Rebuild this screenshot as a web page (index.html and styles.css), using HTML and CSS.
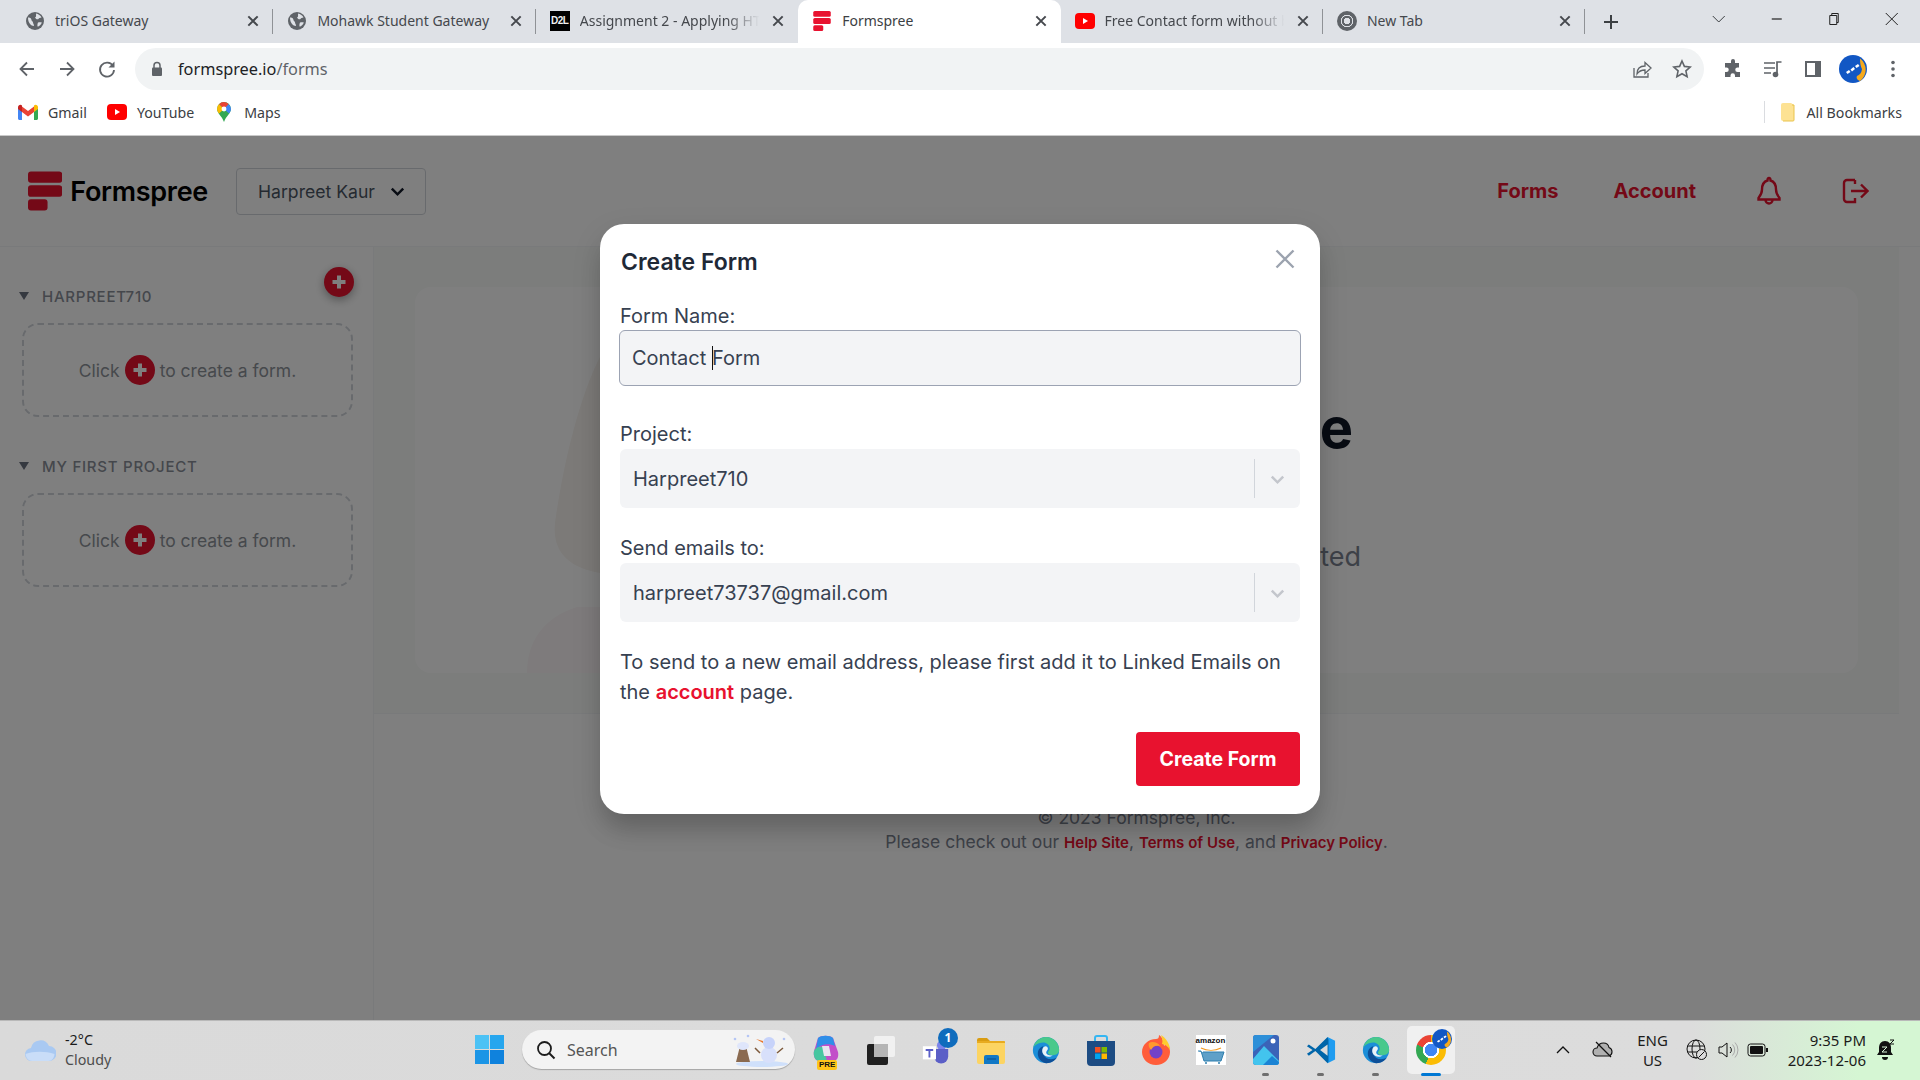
FILE: index.html
```html
<!DOCTYPE html>
<html lang="en">
<head>
  <meta charset="UTF-8">
  <title>Formspree</title>
  <link rel="stylesheet" href="styles.css">
</head>
<body>
  <svg class="defs" width="0" height="0">
    <symbol id="globe" viewBox="0 0 20 20">
      <circle cx="10" cy="10" r="9" fill="#5f6368"/>
      <path d="M3 6.5c2-.5 3.5 1 3.5 2.5 0 1.2 1.5 1.2 1.5 2.5 0 1.2 1 1.5 1 3.5-3 0-6-3-6-8.500zM11 2.5c2.5.5 4.5 2 5.5 4-1.500.5-2.500 0-3 1.500-1.500 1-3-.5-3.500-1.500 1.500-.5 1-2.500 1-4zM13 11.5c1.5-.5 3-.5 3.800 0-.7 2-2 3.500-4 4.300-.8-1.300-.3-3 .2-4.300z" fill="#dee1e6"/>
    </symbol>
    <symbol id="fs-mark" viewBox="0 0 35 40">
      <rect width="35" height="11.5" rx="3"/>
      <rect y="14" width="35" height="12" rx="3"/>
      <rect y="28.5" width="20" height="11.5" rx="3"/>
    </symbol>
    <symbol id="close-x" viewBox="0 0 12 12">
      <path d="M2 2l8 8M10 2l-8 8" fill="none" stroke="#45484d" stroke-width="1.7"/>
    </symbol>
    <symbol id="yt" viewBox="0 0 20 16">
      <rect width="20" height="16" rx="4" fill="#f00"/>
      <path d="M8 5l5 3-5 3z" fill="#fff"/>
    </symbol>
    <symbol id="plus-dot" viewBox="0 0 30 30">
      <circle cx="15" cy="15" r="15" fill="#e8122f"/>
      <path d="M15 8.5v13M8.5 15h13" stroke="#fff" stroke-width="4"/>
    </symbol>
    <symbol id="chev" viewBox="0 0 20 20">
      <path d="M4 7l6 6 6-6" fill="none" stroke="currentColor" stroke-width="2.6"/>
    </symbol>
    <symbol id="avatar" viewBox="0 0 28 28">
      <circle cx="14" cy="14" r="14" fill="#1257c4"/>
      <path d="M21 3.500A14 14 0 0 1 21 26c-3-1-4-3-3-5 2.5-1 4.5-3 5-7-1-1.500-2-6-2-10.500z" fill="#f6a91b"/>
      <path d="M7 17l3-2 1.500 2-3 2zM16 11l3-2 1.500 2-3 2zM11.500 14.500l3-2.500 1.500 2-3 2.500z" fill="#fff"/>
    </symbol>
    <symbol id="edge" viewBox="0 0 32 32">
      <circle cx="16" cy="16" r="14" fill="#1b8ed8"/>
      <path d="M16 2c8 0 14 6 14 14 0 3.500-3 5.500-6.500 5.500-3 0-5.500-1-5.500-2.500 0-1.500 2-2 2-4.500 0-4-3.500-6.500-7-6.500-5 0-9.500 3-10.700 6C3.500 7.500 9 2 16 2z" fill="#49c98b"/>
      <path d="M13 12c-4 1-6.500 5-5.500 10 1.200 5 6 8 9 8 5 0 9-2.500 11-6-3 2-8 2.500-11 .5-4-2.500-5-8.500-3.500-12.500z" fill="#0d4f98"/>
      <path d="M18 14.500c0 2-1.800 2.500-1.800 4.500 0 2 3.500 3.300 7 2.800-3.500 2.500-9 1.500-10.700-2.300-1.500-3.500.5-7.500 3-7.500 1.500 0 2.500 1 2.500 2.500z" fill="#e8f2f8"/>
    </symbol>
  </svg>

  <div class="tabstrip">
    <div class="tab sep"><svg class="favicon"><use href="#globe"/></svg><span class="tab-title">triOS Gateway</span><svg class="tab-close"><use href="#close-x"/></svg></div>
    <div class="tab sep"><svg class="favicon"><use href="#globe"/></svg><span class="tab-title">Mohawk Student Gateway</span><svg class="tab-close"><use href="#close-x"/></svg></div>
    <div class="tab"><span class="favicon d2l">D2L</span><span class="tab-title fade">Assignment 2 - Applying HTML</span><svg class="tab-close"><use href="#close-x"/></svg></div>
    <div class="tab active"><svg class="favicon fs-red"><use href="#fs-mark"/></svg><span class="tab-title">Formspree</span><svg class="tab-close"><use href="#close-x"/></svg></div>
    <div class="tab sep"><svg class="favicon"><use href="#yt"/></svg><span class="tab-title fade">Free Contact form without backend</span><svg class="tab-close"><use href="#close-x"/></svg></div>
    <div class="tab sep"><span class="favicon chrome-grey"></span><span class="tab-title">New Tab</span><svg class="tab-close"><use href="#close-x"/></svg></div>
    <svg class="new-tab" viewBox="0 0 16 16"><path d="M8 1v14M1 8h14" stroke="#3c4043" stroke-width="2"/></svg>
    <div class="window-controls">
      <svg viewBox="0 0 14 14"><path d="M1 4l6 6 6-6" fill="none" stroke="#3c4043"/></svg>
      <svg viewBox="0 0 14 14"><path d="M2 7h10" stroke="#222" stroke-width="1.2"/></svg>
      <svg viewBox="0 0 14 14"><path d="M3 3.500h7v9H3zM5 3.500V1.500h6.500v9H10" fill="none" stroke="#222"/></svg>
      <svg viewBox="0 0 14 14"><path d="M1 1l12 12M13 1L1 13" stroke="#222"/></svg>
    </div>
  </div>

  <div class="toolbar">
    <div class="nav-btn"><svg viewBox="0 0 20 20"><path d="M17 10H4M10 3.500L3.500 10l6.500 6.500" fill="none" stroke="#5f6368" stroke-width="1.8"/></svg></div>
    <div class="nav-btn"><svg viewBox="0 0 20 20"><path d="M3 10h13M10 3.500l6.500 6.500-6.500 6.500" fill="none" stroke="#5f6368" stroke-width="1.8"/></svg></div>
    <div class="nav-btn"><svg viewBox="0 0 20 20"><path d="M16 7a7 7 0 1 0 1 4" fill="none" stroke="#5f6368" stroke-width="1.8"/><path d="M17.500 2.500v6h-6z" fill="#5f6368"/></svg></div>
    <div class="urlbar">
      <svg class="lock" viewBox="0 0 12 16"><path d="M3 7V4.500a3 3 0 0 1 6 0V7" fill="none" stroke="#5f6368" stroke-width="1.5"/><rect x="1" y="6.5" width="10" height="8.5" rx="1" fill="#5f6368"/></svg>
      <span class="url"><span class="url-host">formspree.io</span>/forms</span>
      <svg class="url-icon" viewBox="0 0 20 20"><path d="M2 9v9h14v-4" fill="none" stroke="#5f6368" stroke-width="1.3"/><path d="M5 15c0-5 3-8 8-8V3.500l6 5.500-6 5.500V11c-4 0-6 1-8 4z" fill="none" stroke="#5f6368" stroke-width="1.3"/></svg>
      <svg class="url-icon star" viewBox="0 0 20 20"><path d="M10 2l2.400 5.400 5.800.6-4.300 3.900 1.200 5.800L10 14.700l-5.100 3 1.200-5.800L1.800 8l5.800-.6z" fill="none" stroke="#5f6368" stroke-width="1.6"/></svg>
    </div>
    <div class="ext-btn"><svg viewBox="0 0 20 20"><path d="M8 2a2 2 0 0 1 4 0v2h4v4.500h-1.500a2.200 2.200 0 0 0 0 4.500H17v5h-5v-1.500a2.200 2.200 0 0 0-4.500 0V18H2v-5h1.500a2.200 2.200 0 0 0 0-4.500H2V4h6z" fill="#5f6368"/></svg></div>
    <div class="ext-btn"><svg viewBox="0 0 20 20"><path d="M1 4h11M1 9h11M1 14h7" stroke="#5f6368" stroke-width="1.7"/><path d="M14 15V3h4.500" fill="none" stroke="#5f6368" stroke-width="1.7"/><circle cx="12.5" cy="15.5" r="2.8" fill="#5f6368"/></svg></div>
    <div class="ext-btn"><svg viewBox="0 0 20 20"><path d="M2 2h16v16H2z" fill="#5f6368"/><path d="M4 4h8v12H4z" fill="#fff"/></svg></div>
    <div class="ext-btn"><svg class="avatar"><use href="#avatar"/></svg></div>
    <div class="ext-btn"><svg viewBox="0 0 20 20"><circle cx="10" cy="3.5" r="1.8" fill="#5f6368"/><circle cx="10" cy="10" r="1.8" fill="#5f6368"/><circle cx="10" cy="16.5" r="1.8" fill="#5f6368"/></svg></div>
  </div>

  <div class="bookmarks">
    <span class="bookmark"><svg viewBox="0 0 20 16"><path d="M0 3v11.500c0 .8.700 1.500 1.500 1.500H4V7z" fill="#4285f4"/><path d="M16 7v9h2.500c.8 0 1.500-.7 1.500-1.500V3z" fill="#34a853"/><path d="M4 8V2.500l6 4.500 6-4.500V8l-6 4.500z" fill="#ea4335"/><path d="M0 3.500C0 1 2.500 0 4 1.500V8L0 5z" fill="#c5221f"/><path d="M16 1.500C17.500 0 20 1 20 3.500V5l-4 3z" fill="#fbbc04"/></svg>Gmail</span>
    <span class="bookmark"><svg viewBox="0 0 20 16"><use href="#yt"/></svg>YouTube</span>
    <span class="bookmark"><svg viewBox="0 0 20 26"><path d="M10 0a9 9 0 0 1 9 9c0 6-6.500 9-9 17-2.500-8-9-11-9-17a9 9 0 0 1 9-9z" fill="#34a853"/><path d="M4 3l12 0c2 2 3 4 3 6 0 2-1 4-2.500 6L10 9z" fill="#4285f4"/><path d="M3.500 2.800A9 9 0 0 1 16 2.500L10 9z" fill="#ea4335"/><path d="M1 9c0 2 1 4 2.500 6L10 9 3.500 2.800C2 4.500 1 6.500 1 9z" fill="#fbbc04"/><circle cx="10" cy="9" r="3.200" fill="#fff"/></svg>Maps</span>
    <span class="bookmark all-bookmarks"><svg viewBox="0 0 16 20"><path d="M1 3a2 2 0 0 1 2-2h8l3 2v15a1 1 0 0 1-1 1H3a2 2 0 0 1-2-2z" fill="#fde293"/><path d="M12 3h2v15a1 1 0 0 1-1 1H3" fill="none" stroke="#e9c44c"/></svg>All Bookmarks</span>
  </div>

  <div class="page">
    <header class="topbar">
      <div class="brand"><svg class="brand-mark"><use href="#fs-mark"/></svg><span class="brand-name">Formspree</span></div>
      <div class="user-menu">Harpreet Kaur<svg class="user-chev"><use href="#chev"/></svg></div>
      <nav class="topnav">
        <a class="topnav-link">Forms</a>
        <a class="topnav-link account-link">Account</a>
        <svg class="bell" viewBox="0 0 24 30"><path d="M12 2c1 0 1.500 1 1.500 2.500 4 1.200 5.500 4.500 5.500 9 0 4 1.500 6 3.500 8.500v1.500h-21V22c2-2.500 3.500-4.500 3.500-8.500 0-4.500 1.500-7.800 5.500-9C10.500 3 11 2 12 2zM8.500 24a3.500 3.500 0 0 0 7 0" fill="none" stroke="#e8122f" stroke-width="2.4"/></svg>
        <svg class="logout" viewBox="0 0 28 28"><path d="M14 3H6a3 3 0 0 0-3 3v16a3 3 0 0 0 3 3h8v-4M14 7V3M10 14h16M20 7.500l6.500 6.500-6.500 6.500" fill="none" stroke="#e8122f" stroke-width="2.4"/></svg>
      </nav>
    </header>

    <div class="body-row">
      <aside class="sidebar">
        <div class="add-row"><svg class="add-btn"><use href="#plus-dot"/></svg></div>
        <section class="project project-first">
          <h3 class="project-name"><span class="caret-down"></span>HARPREET710</h3>
          <div class="empty-box">Click <svg class="inline-plus"><use href="#plus-dot"/></svg> to create a form.</div>
        </section>
        <section class="project">
          <h3 class="project-name"><span class="caret-down"></span>MY FIRST PROJECT</h3>
          <div class="empty-box">Click <svg class="inline-plus"><use href="#plus-dot"/></svg> to create a form.</div>
        </section>
      </aside>

      <div class="content">
        <main class="main-panel">
          <div class="hero-card">
            <svg class="hero-art" viewBox="0 0 120 320"><path d="M75 2C60 30 40 90 29 170c-3 30 15 45 45 50h46V2z" fill="#f8f4f0"/><path d="M1 320c0-30 15-55 50-66h70v66z" fill="#fcf7f8"/></svg>
            <div class="hero-text">
              <h1 class="hero-title">Welcome to Formspree</h1>
              <p class="hero-sub">Create a form to get started</p>
            </div>
          </div>
        </main>
        <footer class="site-footer">
          <p>© 2023 Formspree, Inc.</p>
          <p>Please check out our <a>Help Site</a>, <a>Terms of Use</a>, and <a>Privacy Policy</a>.</p>
        </footer>
      </div>
    </div>

    <div class="overlay">
      <div class="modal">
        <div class="modal-head">
          <h2 class="modal-title">Create Form</h2>
          <svg class="modal-close" viewBox="0 0 20 20"><path d="M1.500 1.500l17 17M18.500 1.500l-17 17" stroke="#9ca3af" stroke-width="2.4"/></svg>
        </div>
        <label class="field-label">Form Name:</label>
        <div class="text-input">Contact <span class="text-caret"></span>Form</div>
        <label class="field-label project-label">Project:</label>
        <div class="select">
          <span class="select-value">Harpreet710</span>
          <span class="select-sep"></span>
          <svg class="select-chev"><use href="#chev"/></svg>
        </div>
        <label class="field-label email-label">Send emails to:</label>
        <div class="select">
          <span class="select-value">harpreet73737@gmail.com</span>
          <span class="select-sep"></span>
          <svg class="select-chev"><use href="#chev"/></svg>
        </div>
        <p class="modal-note">To send to a new email address, please first add it to Linked Emails on the <a>account</a> page.</p>
        <div class="modal-actions"><button class="btn-primary">Create Form</button></div>
      </div>
    </div>
  </div>

  <div class="taskbar">
    <div class="weather">
      <svg class="weather-icon" viewBox="0 0 32 24"><path d="M8 23a6.500 6.500 0 0 1-1-13 9.500 9.500 0 0 1 18-2 7.500 7.500 0 0 1 0 15z" fill="#a9c9f2"/><path d="M1.500 16c8-3 20-3 29 0-.5 4-2.500 7-6 7H8c-3.500 0-6-3-6.500-7z" fill="#c9ddf8"/></svg>
      <div class="weather-text"><span>-2°C</span><span class="weather-label">Cloudy</span></div>
    </div>
    <svg class="start" viewBox="0 0 29 29"><rect width="14" height="14" fill="#4cc2f5"/><rect x="15" width="14" height="14" fill="#26a6ee"/><rect y="15" width="14" height="14" fill="#1b95e6"/><rect x="15" y="15" width="14" height="14" fill="#0f82dd"/></svg>
    <div class="searchbox">
      <svg class="search-glass" viewBox="0 0 20 20"><circle cx="8.5" cy="8.5" r="6.5" fill="none" stroke="#1c1c1c" stroke-width="1.8"/><path d="M13 13l5.500 5.500" stroke="#1c1c1c" stroke-width="2"/></svg>
      <span class="search-label">Search</span>
      <svg class="snowman" viewBox="0 0 60 34"><ellipse cx="32" cy="31" rx="26" ry="3" fill="#cfe0fb"/><path d="M6 29l3-12a4 4 0 0 1 8 0l3 12z" fill="#8a6a50"/><ellipse cx="13" cy="13" rx="6" ry="4" fill="#dfe6fb"/><circle cx="39" cy="22" r="8" fill="#d8e0fb"/><circle cx="39" cy="10" r="6" fill="#c7d3fa"/><path d="M33 8l-7-2 7 4z" fill="#e8772e"/><path d="M30 20l-5-5M47 20l6-5" stroke="#7d5a3c" stroke-width="1.5"/><circle cx="5" cy="6" r="1.3" fill="#b5c6f5"/><circle cx="18" cy="3" r="1.3" fill="#b5c6f5"/><circle cx="54" cy="6" r="1.3" fill="#b5c6f5"/></svg>
    </div>
    <div class="apps">
      <div class="app">
        <svg viewBox="0 0 30 32"><path d="M7 4c3-3 12-3 15 0l5 14c1 5-1 9-5 9H9C4 27 2 22 3 17z" fill="#c24fc9"/><path d="M7 4c3-3 12-3 15 0l2 8c-6-3-14-2-19 3z" fill="#2f8fe8"/><path d="M3 17c1-3 5-5 9-4l4 14H9C4 27 2 22 3 17z" fill="#46c6a0"/><path d="M11 12h7l2 10h-7z" fill="#e8e4f0"/></svg>
        <span class="pre-badge">PRE</span>
      </div>
      <div class="app"><svg viewBox="0 0 30 30"><rect x="8" y="1" width="21" height="21" rx="2" fill="#f1f1f1"/><rect x="1" y="9" width="21" height="21" rx="2" fill="#202020"/><rect x="8" y="9" width="14" height="13" fill="#b5b5b5"/></svg></div>
      <div class="app">
        <svg viewBox="0 0 32 32"><circle cx="22" cy="11" r="5" fill="#7b83eb"/><path d="M14 15h15v8a7 7 0 0 1-15 0z" fill="#5b5fc7"/><rect x="2" y="12" width="14" height="14" fill="#fff"/><path d="M5 15h8v2h-3v7H8v-7H5z" fill="#5b5fc7"/></svg>
        <span class="count-badge">1</span>
      </div>
      <div class="app"><svg viewBox="0 0 30 30"><path d="M1 5a2 2 0 0 1 2-2h8l3 3h-13z" fill="#d99c11"/><path d="M1 6h27a1 1 0 0 1 1 1v20a2 2 0 0 1-2 2H3a2 2 0 0 1-2-2z" fill="#fcd462"/><path d="M1 6h27a1 1 0 0 1 1 1v1H1z" fill="#e8ab1f"/><path d="M8 22a2 2 0 0 1 2-2h11a2 2 0 0 1 2 2v7H8z" fill="#1178c6"/><path d="M11 24h9" stroke="#0b4f8a"/></svg></div>
      <div class="app"><svg><use href="#edge"/></svg></div>
      <div class="app"><svg viewBox="0 0 30 32"><path d="M9 8V4a2 2 0 0 1 2-2h8a2 2 0 0 1 2 2v4" fill="none" stroke="#35b6f2" stroke-width="2"/><path d="M1 7h28v21a4 4 0 0 1-4 4H5a4 4 0 0 1-4-4z" fill="#1d4c83"/><rect x="9" y="13" width="5.5" height="5.5" fill="#f25022"/><rect x="15.5" y="13" width="5.5" height="5.5" fill="#7fba00"/><rect x="9" y="19.5" width="5.5" height="5.5" fill="#00a4ef"/><rect x="15.5" y="19.5" width="5.500" height="5.5" fill="#ffb900"/></svg></div>
      <div class="app"><svg viewBox="0 0 30 32"><path d="M15 5C7 5 1 11 1 18s6 13 14 13 14-6 14-13c0-5-2-8-4-11 0 3-1 4-2 5 0-5-2-9-5-11 0 3-1 4-3 4z" fill="#ff5d3a"/><path d="M20 1c5 3 9 9 9 15-2-4-6-6-8-6 1-3 0-6-1-9z" fill="#ffcb2e"/><circle cx="15" cy="18" r="6.5" fill="#7442c8"/><path d="M8 9c3-2 9-1 11 3-4-1-7 0-9 4-2-2-3-5-2-7z" fill="#ff9a2e"/></svg></div>
      <div class="app app-amazon"><span class="amazon-word">amazon</span><svg viewBox="0 0 30 19"><path d="M5 3c6 3 14 3 20 0" fill="none" stroke="#f49a1d" stroke-width="1.2"/><path d="M2 6h3l3 10h17l3-9H7" fill="#5fa0c8" stroke="#2f7fae"/><circle cx="10" cy="18" r="1" fill="#2f7fae"/><circle cx="23" cy="18" r="1" fill="#2f7fae"/></svg></div>
      <div class="app open"><svg viewBox="0 0 30 32"><rect x="2" y="1" width="26" height="30" rx="3" fill="#3b63b8"/><path d="M2 4a3 3 0 0 1 3-3h18L2 18z" fill="#2d8fd8"/><path d="M2 25l11-13 15 15v1a3 3 0 0 1-3 3H5a3 3 0 0 1-3-3z" fill="#43c4ee"/><path d="M12 31l9-9 7 6a3 3 0 0 1-3 3z" fill="#1b83d4"/><circle cx="22" cy="7" r="2.5" fill="#fff"/></svg></div>
      <div class="app open"><svg viewBox="0 0 32 32"><path d="M23 2l8 4v20l-8 4z" fill="#1f9cf0"/><path d="M23 2L10 15 3 10l-2 2 6 4-6 4 2 2 7-5 13 13 1-2V5z" fill="#0065a9"/><path d="M23 10v12l-8-6z" fill="#dcdcdc"/></svg></div>
      <div class="app open"><svg><use href="#edge"/></svg></div>
      <div class="app active-app"><span class="chrome-logo"></span><svg class="chrome-avatar"><use href="#avatar"/></svg></div>
    </div>
    <div class="tray">
      <svg class="tray-slot chevron-up" viewBox="0 0 14 8"><path d="M1 7l6-6 6 6" fill="none" stroke="#111" stroke-width="1.3"/></svg>
      <svg class="tray-slot onedrive" viewBox="0 0 22 18"><path d="M5 15a4 4 0 0 1 0-8c1-3 3.500-5 6.500-5 3 0 5 2 5.500 4.500A4.500 4.500 0 0 1 17 15z" fill="#b0b0b0" stroke="#111" stroke-width="1.1"/><path d="M4 1l15 15" stroke="#111" stroke-width="1.3"/></svg>
      <div class="lang"><span>ENG</span><span>US</span></div>
      <svg class="tray-slot globe-off" viewBox="0 0 22 22"><circle cx="10" cy="10" r="9" fill="none" stroke="#111"/><ellipse cx="10" cy="10" rx="4" ry="9" fill="none" stroke="#111"/><path d="M1.500 7h17M1.500 13h17" stroke="#111"/><circle cx="15.5" cy="15.5" r="5" fill="#dcdcdc" stroke="#111"/><path d="M12.500 18.500l6-6" stroke="#111"/></svg>
      <svg class="tray-slot speaker" viewBox="0 0 22 18"><path d="M2 6h3l5-4v14l-5-4H2z" fill="none" stroke="#111"/><path d="M13 6a4 4 0 0 1 0 6" fill="none" stroke="#111"/><path d="M15.500 3.500a8 8 0 0 1 0 11M18 1.500a11 11 0 0 1 0 15" fill="none" stroke="#aaa"/></svg>
      <svg class="tray-slot battery" viewBox="0 0 22 14"><rect x="1" y="1" width="17" height="12" rx="2.5" fill="none" stroke="#111"/><rect x="3" y="3" width="13" height="8" rx="1" fill="#111"/><rect x="19" y="5" width="2" height="4" fill="#111"/></svg>
      <div class="clock"><span>9:35 PM</span><span>2023-12-06</span></div>
      <div class="quiet-bell">
        <svg viewBox="0 0 20 22"><path d="M10 2c4 0 6 3 6 7v4l2 3H2l2-3V9c0-4 2-7 6-7z" fill="#111"/><path d="M7 18a3 3 0 0 0 6 0z" fill="#111"/><path d="M7 8h5l-5 5h5" fill="none" stroke="#d8f0d8"/><path d="M15 1h4l-4 4h4" fill="none" stroke="#111"/></svg>
      </div>
    </div>
  </div>
</body>
</html>
```

FILE: styles.css
```css
* {
  box-sizing: border-box;
}
html, body {
  margin: 0;
  height: 100%;
}
body {
  display: flex;
  flex-direction: column;
  height: 1080px;
  overflow: hidden;
  font-family: Inter, "Liberation Sans", sans-serif;
  background: #fff;
}
h1, h2, h3, p {
  margin: 0;
}
.defs {
  position: absolute;
}

/* browser tabs */
.tabstrip {
  display: flex;
  align-items: stretch;
  flex: none;
  height: 43px;
  padding-left: 11px;
  background: #dee1e6;
  font-family: "Noto Sans", sans-serif;
  font-size: 14px;
  color: #45484d;
}
.tab {
  position: relative;
  display: flex;
  align-items: center;
  width: 262.4px;
  padding: 0 13px 2px 14px;
}
.tab.sep::after {
  content: "";
  position: absolute;
  right: 0;
  top: 9px;
  height: 25px;
  width: 1px;
  background: #8f9296;
}
.tab.active {
  background: #fff;
  border-radius: 10px 10px 0 0;
  color: #3c4043;
}
.favicon {
  flex: none;
  width: 20px;
  height: 20px;
  margin-right: 10px;
}
.fs-red {
  fill: #e8122f;
}
.d2l {
  background: #000;
  color: #f1f1f1;
  font: bold 10px/20px "Liberation Sans", sans-serif;
  letter-spacing: -.5px;
  text-align: center;
}
.chrome-grey {
  border-radius: 50%;
  background: radial-gradient(circle, #dee1e6 0 3px, #5f6368 3.5px 5px, #dee1e6 5.5px 6px, #5f6368 6.5px);
}
.tab-title {
  flex: 1;
  min-width: 0;
  overflow: hidden;
  white-space: nowrap;
}
.fade {
  -webkit-mask-image: linear-gradient(to right, #000 80%, transparent 98%);
  mask-image: linear-gradient(to right, #000 80%, transparent 98%);
}
.tab-close {
  flex: none;
  width: 14px;
  height: 14px;
  margin-left: 8px;
}
.new-tab {
  width: 16px;
  height: 16px;
  align-self: center;
  margin-left: 18px;
}
.window-controls {
  display: flex;
  margin-left: auto;
  align-items: center;
}
.window-controls svg {
  width: 57.5px;
  height: 14px;
  margin-top: -5px;
}

/* address bar */
.toolbar {
  display: flex;
  flex: none;
  align-items: center;
  height: 48px;
  padding: 5px 7px 1px;
  background: #fff;
}
.nav-btn, .ext-btn {
  display: flex;
  align-items: center;
  justify-content: center;
  flex: none;
  width: 40px;
}
.nav-btn svg, .ext-btn svg {
  width: 20px;
  height: 20px;
}
.ext-btn svg.avatar {
  width: 28px;
  height: 28px;
}
.urlbar {
  display: flex;
  align-items: center;
  flex: 1;
  height: 42px;
  margin: 0 9px 0 8px;
  padding: 0 12px 0 16px;
  border-radius: 21px;
  background: #f1f3f4;
}
.lock {
  width: 12px;
  height: 16px;
  margin-right: 15px;
}
.url {
  flex: 1;
  font-family: "Noto Sans", sans-serif;
  font-size: 16.3px;
  color: #5f6368;
}
.url-host {
  color: #202124;
}
.url-icon {
  width: 20px;
  height: 20px;
}
.url-icon.star {
  margin-left: 20px;
}

/* bookmarks */
.bookmarks {
  display: flex;
  flex: none;
  align-items: center;
  height: 45px;
  padding: 0 18px 2px;
  border-bottom: 1px solid #c9c9c9;
  font-family: "Noto Sans", sans-serif;
  font-size: 14.2px;
  color: #3c4043;
}
.bookmark {
  display: flex;
  align-items: center;
  gap: 10px;
  margin-right: 20px;
}
.bookmark svg {
  width: 20px;
  height: 20px;
}
.all-bookmarks {
  margin: 0 0 0 auto;
  padding-left: 15px;
  border-left: 1px solid #dadce0;
  height: 22px;
  gap: 11px;
}
.all-bookmarks svg {
  width: 16px;
}

/* formspree page, dimmed by .overlay */
.page {
  position: relative;
  flex: 1;
  min-height: 0;
  background: #fff;
}
.topbar {
  display: flex;
  align-items: center;
  height: 111px;
  padding: 0 51px 0 28px;
  border-bottom: 1px solid #f3f4f6;
}
.brand {
  display: flex;
  align-items: center;
  gap: 8px;
  width: 180px;
}
.brand-mark {
  width: 35px;
  height: 40px;
  fill: #e8122f;
}
.brand-name {
  font-size: 27px;
  font-weight: 600;
  letter-spacing: -.3px;
  color: #000;
}
.user-menu {
  display: flex;
  align-items: center;
  justify-content: space-between;
  width: 190px;
  height: 47px;
  margin-left: 28px;
  padding: 0 18px 0 21px;
  border: 1.5px solid #d1d5db;
  border-radius: 4px;
  font-size: 17.6px;
  color: #4b5563;
}
.user-chev {
  width: 19px;
  height: 19px;
  color: #111827;
}
.topnav {
  display: flex;
  align-items: center;
  margin-left: auto;
}
.topnav-link {
  font-size: 20px;
  font-weight: 700;
  color: #e8122f;
}
.account-link {
  margin-left: 55px;
}
.bell {
  width: 24px;
  height: 30px;
  margin-left: 61px;
}
.logout {
  width: 28px;
  height: 28px;
  margin-left: 60px;
}
.body-row {
  display: flex;
  height: 773px;
}
.sidebar {
  flex: none;
  width: 374px;
  padding: 20px 20px 0 19px;
  border-right: 1px solid #f3f4f6;
}
.add-row {
  display: flex;
  justify-content: flex-end;
  height: 30px;
}
.add-btn {
  width: 30px;
  height: 30px;
  margin-right: -1px;
  filter: drop-shadow(0 3px 5px rgba(0,0,0,.35));
}
.project-first {
  margin-top: -13px;
}
.project {
  margin-bottom: 37px;
}
.project-name {
  display: flex;
  align-items: center;
  height: 24px;
  font-size: 15px;
  font-weight: 500;
  letter-spacing: .75px;
  color: #8a8f99;
}
.caret-down {
  width: 0;
  height: 0;
  margin-right: 13px;
  border-left: 5px solid transparent;
  border-right: 5px solid transparent;
  border-top: 8px solid #6b7280;
}
.empty-box {
  display: flex;
  align-items: center;
  justify-content: center;
  gap: 5px;
  height: 94px;
  margin: 15px 0 0 3px;
  border: 2px dashed #d1d5db;
  border-radius: 16px;
  font-size: 17.5px;
  color: #8d9299;
}
.inline-plus {
  width: 30px;
  height: 30px;
}
.content {
  display: flex;
  flex-direction: column;
  flex: 1;
  min-width: 0;
}
.main-panel {
  height: 467px;
  margin-right: 21px;
  padding: 40px 41px;
  background: #f8fbf9;
  border-bottom: 1px solid #f3f4f6;
}
.hero-card {
  position: relative;
  display: flex;
  height: 386px;
  border-radius: 16px;
  background: #fff;
  overflow: hidden;
}
.hero-art {
  width: 120px;
  height: 320px;
  align-self: flex-end;
  margin-left: 111px;
}
.hero-text {
  margin-left: 76px;
  padding-top: 106px;
  width: 618px;
  text-align: right;
}
.hero-title {
  font-size: 56px;
  font-weight: 700;
  line-height: 70px;
  white-space: nowrap;
  color: #111827;
}
.hero-sub {
  margin: 77px -21px 0 0;
  font-size: 27px;
  color: #7b8290;
}
.site-footer {
  padding-top: 92px;
  margin-right: 21px;
  text-align: center;
  font-size: 17.5px;
  line-height: 24px;
  color: #7b8290;
}
.site-footer a {
  font-size: 15px;
  font-weight: 600;
  color: #e8122f;
}

/* modal */
.overlay {
  position: absolute;
  inset: 0;
  display: flex;
  justify-content: center;
  align-items: flex-start;
  padding-top: 88px;
  background: rgba(0,0,0,.5);
}
.modal {
  width: 720px;
  height: 590px;
  padding: 22px 20px 0;
  border-radius: 24px;
  background: #fff;
  box-shadow: 0 20px 25px -5px rgba(0,0,0,.15), 0 10px 30px rgba(0,0,0,.12);
  font-size: 20px;
  color: #374151;
}
.modal-head {
  display: flex;
  align-items: flex-start;
  justify-content: space-between;
  height: 56px;
}
.modal-title {
  font-size: 23px;
  font-weight: 600;
  line-height: 32px;
  padding-left: 1px;
  color: #1f2937;
}
.modal-close {
  width: 20px;
  height: 20px;
  margin: 3px 5px 0 0;
}
.field-label {
  display: block;
  height: 28px;
  line-height: 28px;
}
.project-label {
  margin-top: 34px;
  height: 29px;
}
.email-label {
  margin-top: 26px;
  height: 29px;
}
.text-input {
  display: flex;
  align-items: center;
  height: 56px;
  margin: 0 -1px;
  padding-left: 12px;
  border: 1.5px solid #9ca3b3;
  border-radius: 6px;
  background: #f3f4f6;
  white-space: pre;
}
.text-caret {
  width: 1px;
  height: 24px;
  margin-right: -1px;
  background: #111;
}
.select {
  display: flex;
  align-items: center;
  height: 59px;
  padding-left: 13px;
  border-radius: 6px;
  background: #f3f4f6;
}
.select-value {
  flex: 1;
}
.select-sep {
  width: 1px;
  height: 39px;
  background: #d1d5db;
}
.select-chev {
  width: 19px;
  height: 19px;
  margin: 2px 13px 0;
  color: #c3c6cc;
}
.modal-note {
  margin-top: 25px;
  line-height: 30px;
}
.modal-note a {
  font-weight: 600;
  color: #e8122f;
}
.modal-actions {
  display: flex;
  justify-content: flex-end;
  margin-top: 25px;
}
.btn-primary {
  width: 164px;
  height: 54px;
  border: 0;
  border-radius: 4px;
  background: #e8122f;
  font-family: inherit;
  font-size: 19.5px;
  font-weight: 700;
  color: #fff;
}

/* windows taskbar */
.taskbar {
  display: flex;
  flex: none;
  align-items: center;
  height: 60px;
  padding-bottom: 2px;
  border-top: 1px solid #b9b9b9;
  background: linear-gradient(to right, #dadada 0, #dcdcdc 1690px, #d5f6d3 1860px);
  font-family: "Noto Sans", sans-serif;
  font-size: 15px;
  color: #1b1b1b;
}
.weather {
  display: flex;
  align-items: center;
  flex: none;
  width: 475px;
  padding-left: 24px;
  font-size: 14.3px;
}
.weather-icon {
  width: 32px;
  height: 24px;
}
.weather-text {
  display: flex;
  flex-direction: column;
  margin-left: 9px;
  line-height: 20px;
}
.weather-label {
  color: #4d4d4d;
}
.start {
  flex: none;
  width: 29px;
  height: 29px;
}
.searchbox {
  display: flex;
  align-items: center;
  flex: none;
  width: 273px;
  height: 39px;
  margin-left: 18px;
  padding: 0 5px 0 14px;
  border-radius: 20px;
  background: #f3f3f3;
  box-shadow: 0 1px 1px rgba(0,0,0,.25);
}
.search-glass {
  width: 20px;
  height: 20px;
}
.search-label {
  flex: 1;
  margin-left: 11px;
  font-size: 16px;
  color: #555;
}
.snowman {
  width: 60px;
  height: 34px;
}
.apps {
  display: flex;
  flex: none;
  margin-left: 3px;
}
.app {
  position: relative;
  display: flex;
  align-items: center;
  justify-content: center;
  width: 55px;
  height: 48px;
}
.app svg {
  width: 30px;
  height: 32px;
}
.app.open::after, .active-app::after {
  content: "";
  position: absolute;
  bottom: -2px;
  left: 24px;
  width: 7px;
  height: 3px;
  border-radius: 2px;
  background: #6f6f6f;
}
.active-app {
  border-radius: 5px;
  background: #f0f0f0;
  margin-left: 4px;
  width: 48px;
}
.active-app::after {
  left: 14px;
  width: 20px;
  background: #0078d4;
}
.chrome-logo {
  width: 30px;
  height: 30px;
  border-radius: 50%;
  background:
    radial-gradient(circle, #3f86f4 0 6px, #fff 6.5px 8px, transparent 8.5px),
    conic-gradient(#fbbc04 80deg, #fbbc04 200deg, #34a853 200deg 290deg, #ea4335 290deg 360deg);
}
.app svg.chrome-avatar {
  position: absolute;
  right: 3px;
  top: 3px;
  width: 20px;
  height: 20px;
}
.pre-badge {
  position: absolute;
  left: 19px;
  bottom: 4px;
  padding: 0 2px;
  border-radius: 2px;
  background: #ffc61a;
  font: bold 8px/10px "Liberation Sans", sans-serif;
  color: #111;
}
.count-badge {
  position: absolute;
  left: 30px;
  top: 2px;
  width: 20px;
  height: 20px;
  border-radius: 50%;
  background: #0f6cbd;
  font: bold 12px/20px "Noto Sans", sans-serif;
  text-align: center;
  color: #fff;
}
.app-amazon {
  flex-direction: column;
}
.app-amazon::before {
  content: "";
  position: absolute;
  left: 12.5px;
  top: 9px;
  width: 30px;
  height: 30px;
  background: #fff;
}
.amazon-word {
  position: relative;
  font: bold 8px/9px "Liberation Sans", sans-serif;
  color: #111;
}
.app-amazon svg {
  position: relative;
  height: 19px;
}
.tray {
  display: flex;
  flex: none;
  align-items: center;
  margin-left: auto;
  padding-right: 18px;
}
.tray-slot {
  flex: none;
}
.chevron-up {
  width: 14px;
  height: 8px;
  margin: 0 13px;
}
.onedrive {
  width: 22px;
  height: 18px;
  margin: 0 9px;
}
.lang {
  display: flex;
  flex-direction: column;
  align-items: center;
  width: 59px;
  line-height: 20px;
}
.globe-off {
  width: 22px;
  height: 22px;
  margin: 0 4px;
}
.speaker {
  width: 22px;
  height: 18px;
  margin: 0 4.5px;
}
.battery {
  width: 22px;
  height: 14px;
  margin: 0 4px;
}
.clock {
  display: flex;
  flex-direction: column;
  align-items: flex-end;
  width: 86px;
  margin-left: 7px;
  line-height: 20px;
}
.quiet-bell {
  display: flex;
  justify-content: center;
  width: 34px;
  margin-left: 2px;
}
.quiet-bell svg {
  width: 20px;
  height: 22px;
}
```
